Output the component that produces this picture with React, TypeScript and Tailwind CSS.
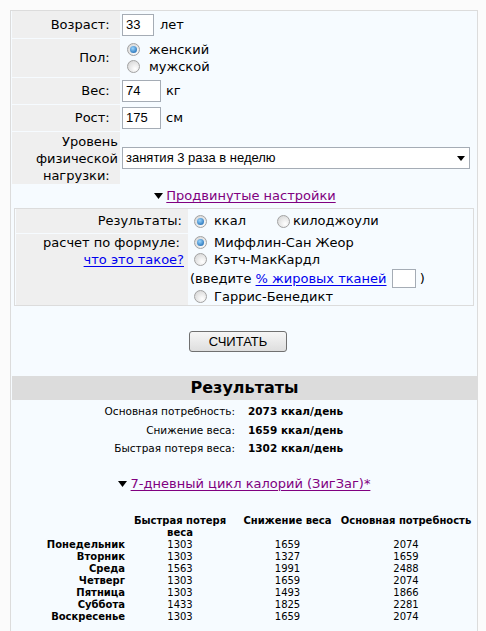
import React from "react";

// Radio dot drawn with CSS so it looks like the old XP-style control
function Radio({ on = false }: { on?: boolean }) {
  return (
    <span className="inline-flex h-[13px] w-[13px] shrink-0 items-center justify-center rounded-full border border-[#a2a2a2] bg-[radial-gradient(circle_at_65%_70%,#ffffff,#d0d0d0)]">
      {on && (
        <span className="h-[7px] w-[7px] rounded-full bg-[radial-gradient(circle_at_40%_35%,#9ad6ff,#0b5aa6)]" />
      )}
    </span>
  );
}

function Arrow() {
  return (
    <svg width="9" height="6" viewBox="0 0 9 6" className="shrink-0">
      <polygon points="0,0 9,0 4.5,6" fill="#000" />
    </svg>
  );
}

function Field({ value, w }: { value: string; w: string }) {
  return (
    <span
      className={`flex h-[22px] items-center border border-[#a5acb5] bg-white pl-[3px] font-['Liberation_Sans',Arial,sans-serif] text-[13px] ${w}`}
    >
      {value}
    </span>
  );
}

const days = [
  ["Понедельник", "1303", "1659", "2074"],
  ["Вторник", "1303", "1327", "1659"],
  ["Среда", "1563", "1991", "2488"],
  ["Четверг", "1303", "1659", "2074"],
  ["Пятница", "1303", "1493", "1866"],
  ["Суббота", "1433", "1825", "2281"],
  ["Воскресенье", "1303", "1659", "2074"],
];

export default function App() {
  return (
    <div className="min-h-screen bg-[#fbfbfb] pl-[10px] pt-[10px] font-['DejaVu_Sans',Verdana,sans-serif] text-[13px] text-black">
      <div className="w-[468px] border border-[#dcdcdc] bg-[#f6fbff] pb-[40px]">
        {/* main form */}
        <div className="grid grid-cols-[108px_1fr] gap-px pl-px">
          <div className="flex h-[27px] items-center justify-end bg-[#efefef] pr-[2px]">Возраст:&nbsp;&nbsp;</div>
          <div className="flex items-center pl-px">
            <Field value="33" w="w-[32px]" />
            <span className="ml-[6px]">лет</span>
          </div>

          <div className="flex h-[38px] items-center justify-end bg-[#efefef] pr-[2px]">Пол:&nbsp;&nbsp;</div>
          <div className="flex flex-col justify-center pl-[6px] leading-[17px]">
            <label className="flex items-center gap-[9px]">
              <Radio on />
              женский
            </label>
            <label className="flex items-center gap-[9px]">
              <Radio />
              мужской
            </label>
          </div>

          <div className="flex h-[26px] items-center justify-end bg-[#efefef] pr-[2px]">Вес:&nbsp;&nbsp;</div>
          <div className="flex items-center pl-px">
            <Field value="74" w="w-[39px]" />
            <span className="ml-[5px]">кг</span>
          </div>

          <div className="flex h-[26px] items-center justify-end bg-[#efefef] pr-[2px]">Рост:&nbsp;&nbsp;</div>
          <div className="flex items-center pl-px">
            <Field value="175" w="w-[39px]" />
            <span className="ml-[5px]">см</span>
          </div>

          <div className="flex h-[52px] items-center justify-end bg-[#efefef] pr-[2px] text-right leading-[17px]">
            Уровень физической нагрузки:&nbsp;&nbsp;
          </div>
          <div className="flex items-center pl-px pr-[7px]">
            <div className="flex h-[22px] w-full items-center justify-between border border-[#a5acb5] bg-white pl-[3px] pr-[4px] font-['Liberation_Sans',Arial,sans-serif] text-[13px]">
              <span>занятия 3 раза в неделю</span>
              <svg width="8" height="5" viewBox="0 0 8 5">
                <polygon points="0,0 8,0 4,5" fill="#000" />
              </svg>
            </div>
          </div>
        </div>

        {/* advanced link */}
        <div className="flex h-[24px] items-center justify-center gap-[3px] pl-[2px]">
          <Arrow />
          <a href="#" className="text-[#800080] underline underline-offset-2">
            Продвинутые настройки
          </a>
        </div>

        {/* advanced box */}
        <div className="mx-[3px] border border-[#dcdcdc]">
          <div className="grid grid-cols-[172px_1fr] gap-px pl-px">
            <div className="flex h-[24px] items-center justify-end bg-[#efefef] pr-[2px]">Результаты:&nbsp;</div>
            <div className="flex items-center pl-[5px]">
              <label className="flex w-[83px] items-center gap-[7px]">
                <Radio on />
                ккал
              </label>
              <label className="flex items-center gap-[3px]">
                <Radio />
                килоджоули
              </label>
            </div>

            <div className="flex h-[71px] flex-col items-end bg-[#efefef] pr-[4px] leading-[17px]">
              <span>расчет по формуле:&nbsp;</span>
              <a href="#" className="text-[#0000ee] underline underline-offset-2">
                что это такое?
              </a>
            </div>
            <div className="flex flex-col leading-[17px]">
              <label className="flex items-center gap-[7px] pl-[5px]">
                <Radio on />
                Миффлин-Сан Жеор
              </label>
              <label className="flex items-center gap-[7px] pl-[5px]">
                <Radio />
                Кэтч-МакКардл
              </label>
              <div className="flex h-[20px] items-center pl-px">
                <span>(введите&nbsp;</span>
                <a href="#" className="text-[#0000ee] underline underline-offset-2">
                  % жировых тканей
                </a>
                <span className="ml-[5px] h-[19px] w-[24px] border border-[#a5acb5] bg-white" />
                <span>&nbsp;)</span>
              </div>
              <label className="flex items-center gap-[7px] pl-[5px]">
                <Radio />
                Гаррис-Бенедикт
              </label>
            </div>
          </div>
        </div>

        {/* submit */}
        <div className="mt-[25px] flex justify-center pr-[12px]">
          <button className="h-[21px] w-[98px] rounded-[3px] border border-[#707070] bg-[linear-gradient(#f6f6f6,#dedede)] font-['Liberation_Sans',Arial,sans-serif] text-[13px]">
            СЧИТАТЬ
          </button>
        </div>

        {/* results */}
        <div className="ml-px mt-[24px] flex h-[24px] items-center justify-center bg-[#dcdcdc] text-[16px] font-bold">
          Результаты
        </div>
        <div className="mt-[2px] grid grid-cols-[224px_1fr] text-[10.5px] leading-[18.5px]">
          <span className="text-right">Основная потребность:</span>
          <span className="pl-[13px] font-bold">2073 ккал/день</span>
          <span className="text-right">Снижение веса:</span>
          <span className="pl-[13px] font-bold">1659 ккал/день</span>
          <span className="text-right">Быстрая потеря веса:</span>
          <span className="pl-[13px] font-bold">1302 ккал/день</span>
        </div>

        <div className="mt-[17px] flex h-[18px] items-center justify-center gap-[4px]">
          <Arrow />
          <a href="#" className="text-[#800080] underline underline-offset-2">
            7-дневный цикл калорий (ЗигЗаг)*
          </a>
        </div>

        {/* zigzag table */}
        <div className="mt-[22px] grid grid-cols-[114px_110px_105px_132px] text-[10px] leading-[12px]">
          <span />
          <span className="text-center font-bold">Быстрая потеря веса</span>
          <span className="whitespace-nowrap text-center font-bold">Снижение веса</span>
          <span className="whitespace-nowrap text-center font-bold">Основная потребность</span>
          {days.map((d) => (
            <React.Fragment key={d[0]}>
              <span className="text-right font-bold">{d[0]}</span>
              <span className="text-center">{d[1]}</span>
              <span className="text-center">{d[2]}</span>
              <span className="text-center">{d[3]}</span>
            </React.Fragment>
          ))}
        </div>
      </div>
    </div>
  );
}
